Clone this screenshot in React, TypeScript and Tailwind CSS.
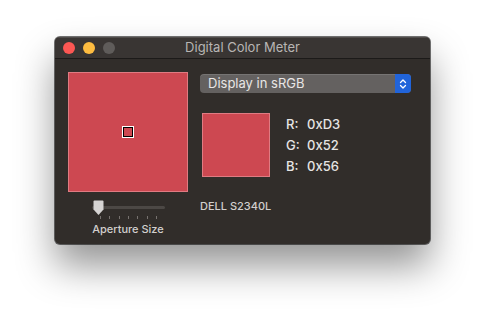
import React from "react";

const font = { fontFamily: '"Inter", "Liberation Sans", sans-serif' };

export default function App() {
  return (
    <div className="h-[318px] w-[486px] overflow-hidden bg-white" style={font}>
      <div className="ml-[55px] mt-[37px] flex h-[207px] w-[375px] flex-col overflow-hidden rounded-[5px] bg-[#312d2a] shadow-[0_0_0_1px_rgba(0,0,0,0.55),0_22px_38px_rgba(0,0,0,0.42)]">
        {/* title bar */}
        <div className="relative flex h-[22px] shrink-0 items-center border-b border-[#1c1a19] bg-[#393533] px-[8px] shadow-[inset_0_1px_0_rgba(255,255,255,0.12)]">
          <div className="flex gap-[8px]">
            <span className="h-[12px] w-[12px] rounded-full bg-[#fc5753]" />
            <span className="h-[12px] w-[12px] rounded-full bg-[#fdbc40]" />
            <span className="h-[12px] w-[12px] rounded-full bg-[#5f5c5a]" />
          </div>
          <div className="absolute inset-0 flex items-center justify-center text-[13px] text-[#b8b5b3]">
            Digital Color Meter
          </div>
        </div>

        {/* content */}
        <div className="flex gap-[12px] pl-[13px] pt-[13px]">
          <div className="flex w-[120px] flex-col items-center">
            <div className="flex h-[120px] w-[120px] items-center justify-center border border-[#e07b82] bg-[#cd4851]">
              <div className="h-[12px] w-[12px] border border-white">
                <div className="h-full w-full border border-black bg-[#cd4851]" />
              </div>
            </div>
            <div className="relative mt-[8px] h-[20px] w-[76px]">
              <div className="absolute left-[2px] right-[1px] top-[6px] h-[3px] rounded-full bg-[#4c4845]" />
              <div className="absolute left-[10px] top-[16px] flex w-[57px] justify-between">
                {Array.from({ length: 7 }).map((_, i) => (
                  <span key={i} className="h-[3px] w-px bg-[#77726f]" />
                ))}
              </div>
              <svg className="absolute left-[2px] top-[0px]" width="13" height="16" viewBox="0 0 13 16">
                <path d="M1.5 1.5 Q1.5 0.5 2.5 0.5 H10.5 Q11.5 0.5 11.5 1.5 V9.5 L6.5 15 L1.5 9.5 Z" fill="#d6d4d3" />
              </svg>
            </div>
            <div className="mt-[2px] text-[11px] font-medium leading-[14px] text-[#d2cfcd]">Aperture Size</div>
          </div>

          <div className="flex flex-col">
            <div className="mt-[2px] flex h-[19px] w-[211px] items-stretch overflow-hidden rounded-[4px] bg-[#646160] shadow-[inset_0_1px_0_rgba(255,255,255,0.12)]">
              <div className="flex flex-1 items-center pl-[8px] text-[13px] text-[#e8e6e5]">Display in sRGB</div>
              <div className="flex w-[16px] items-center justify-center bg-[#2164da]">
                <svg width="8" height="12" viewBox="0 0 8 12" fill="none" stroke="white" strokeWidth="1.3" strokeLinecap="round" strokeLinejoin="round">
                  <path d="M1.5 4.5 4 2 6.5 4.5" />
                  <path d="M1.5 7.5 4 10 6.5 7.5" />
                </svg>
              </div>
            </div>

            <div className="mt-[20px] flex items-center">
              <div className="ml-[2px] h-[64px] w-[68px] border border-[#e07b82] bg-[#cd4851]" />
              <div className="ml-[16px] grid grid-cols-[21px_auto] gap-y-[5px] text-[13px] font-medium leading-[16px] text-[#e6e4e3]">
                <span>R:</span>
                <span>0xD3</span>
                <span>G:</span>
                <span>0x52</span>
                <span>B:</span>
                <span>0x56</span>
              </div>
            </div>

            <div className="mt-[22px] text-[11px] font-medium leading-[14px] text-[#d2cfcd]">DELL S2340L</div>
          </div>
        </div>
      </div>
    </div>
  );
}
